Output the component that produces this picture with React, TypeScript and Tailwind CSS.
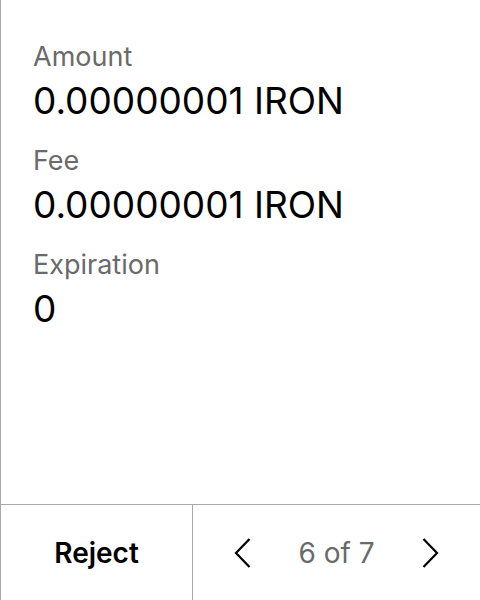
export default function App() {
  const fields = [
    { label: "Amount", value: "0.00000001 IRON" },
    { label: "Fee", value: "0.00000001 IRON" },
    { label: "Expiration", value: "0" },
  ];

  return (
    <div
      className="flex h-[600px] w-[480px] flex-col border-l border-[#a9a9a9] bg-white text-black"
      style={{ fontFamily: "Inter, 'Noto Sans', sans-serif" }}
    >
      <div className="flex flex-1 flex-col gap-[16px] px-[32px] pt-[40px]">
        {fields.map((f) => (
          <div key={f.label} className="flex flex-col">
            <span className="text-[27px] leading-[34px] text-[#6a6a6a]">
              {f.label}
            </span>
            <span className="text-[37px] leading-[54px]">{f.value}</span>
          </div>
        ))}
      </div>
      <div className="flex h-[96px] border-t border-[#a9a9a9]">
        <button className="flex w-[192px] items-center justify-center border-r border-[#a9a9a9] text-[28px] font-semibold">
          Reject
        </button>
        <div className="flex flex-1 items-center justify-center gap-[47px]">
          <svg width="17" height="30" viewBox="0 0 17 30" fill="none">
            <path d="M15.5 1 L2 15 L15.5 29" stroke="black" strokeWidth="2.2" />
          </svg>
          <span className="text-[28px] text-[#6a6a6a]">6 of 7</span>
          <svg width="17" height="30" viewBox="0 0 17 30" fill="none">
            <path d="M1.5 1 L15 15 L1.5 29" stroke="black" strokeWidth="2.2" />
          </svg>
        </div>
      </div>
    </div>
  );
}
